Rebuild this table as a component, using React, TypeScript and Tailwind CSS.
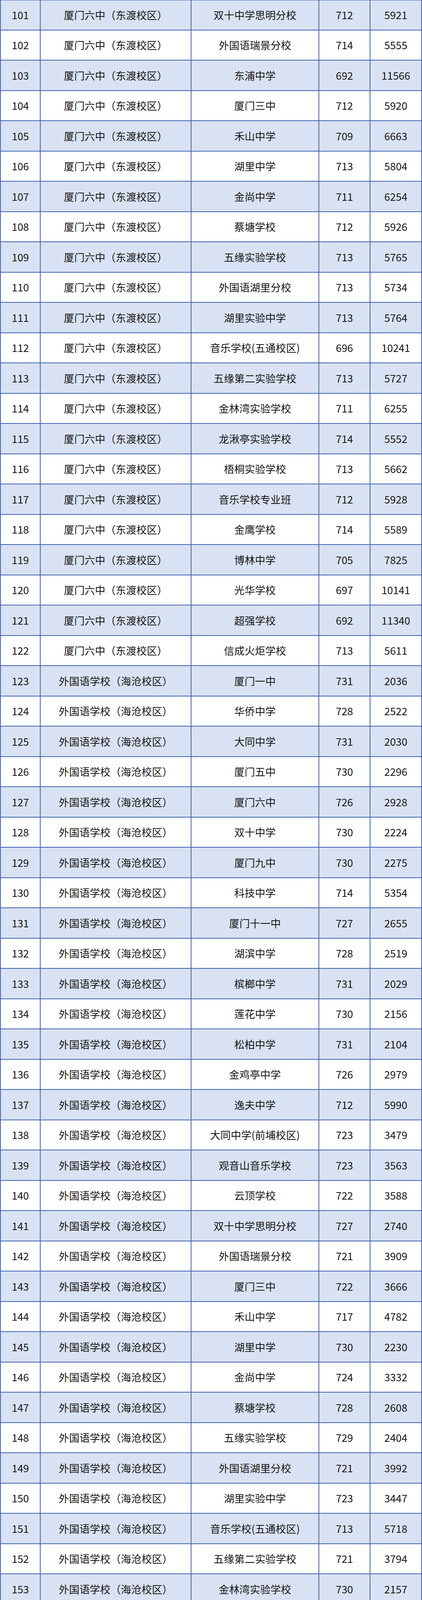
import React from 'react';

type Row = [string, string, number, number];

const D6 = '厦门六中（东渡校区）';
const WG = '外国语学校（海沧校区）';
const SS = '双十中学（枋湖校区）';

// [报考学校, 毕业学校, 分数, 排名]
const rows: Row[] = [
  [D6, '双十中学思明分校', 712, 5921],
  [D6, '外国语瑞景分校', 714, 5555],
  [D6, '东浦中学', 692, 11566],
  [D6, '厦门三中', 712, 5920],
  [D6, '禾山中学', 709, 6663],
  [D6, '湖里中学', 713, 5804],
  [D6, '金尚中学', 711, 6254],
  [D6, '蔡塘学校', 712, 5926],
  [D6, '五缘实验学校', 713, 5765],
  [D6, '外国语湖里分校', 713, 5734],
  [D6, '湖里实验中学', 713, 5764],
  [D6, '音乐学校(五通校区)', 696, 10241],
  [D6, '五缘第二实验学校', 713, 5727],
  [D6, '金林湾实验学校', 711, 6255],
  [D6, '龙湫亭实验学校', 714, 5552],
  [D6, '梧桐实验学校', 713, 5662],
  [D6, '音乐学校专业班', 712, 5928],
  [D6, '金鹰学校', 714, 5589],
  [D6, '博林中学', 705, 7825],
  [D6, '光华学校', 697, 10141],
  [D6, '超强学校', 692, 11340],
  [D6, '信成火炬学校', 713, 5611],
  [WG, '厦门一中', 731, 2036],
  [WG, '华侨中学', 728, 2522],
  [WG, '大同中学', 731, 2030],
  [WG, '厦门五中', 730, 2296],
  [WG, '厦门六中', 726, 2928],
  [WG, '双十中学', 730, 2224],
  [WG, '厦门九中', 730, 2275],
  [WG, '科技中学', 714, 5354],
  [WG, '厦门十一中', 727, 2655],
  [WG, '湖滨中学', 728, 2519],
  [WG, '槟榔中学', 731, 2029],
  [WG, '莲花中学', 730, 2156],
  [WG, '松柏中学', 731, 2104],
  [WG, '金鸡亭中学', 726, 2979],
  [WG, '逸夫中学', 712, 5990],
  [WG, '大同中学(前埔校区)', 723, 3479],
  [WG, '观音山音乐学校', 723, 3563],
  [WG, '云顶学校', 722, 3588],
  [WG, '双十中学思明分校', 727, 2740],
  [WG, '外国语瑞景分校', 721, 3909],
  [WG, '厦门三中', 722, 3666],
  [WG, '禾山中学', 717, 4782],
  [WG, '湖里中学', 730, 2230],
  [WG, '金尚中学', 724, 3332],
  [WG, '蔡塘学校', 728, 2608],
  [WG, '五缘实验学校', 729, 2404],
  [WG, '外国语湖里分校', 721, 3992],
  [WG, '湖里实验中学', 723, 3447],
  [WG, '音乐学校(五通校区)', 713, 5718],
  [WG, '五缘第二实验学校', 721, 3794],
  [WG, '金林湾实验学校', 730, 2157],
  [WG, '龙湫亭实验学校', 726, 2997],
  [WG, '梧桐实验学校', 719, 4380],
  [WG, '音乐学校专业班', 734, 1535],
  [WG, '博林中学', 713, 5812],
  [WG, '光华学校', 714, 5485],
  [WG, '信成火炬学校', 734, 1575],
  [WG, '海沧华附实验中学', 733, 1750],
  [WG, '海沧实验中学', 733, 1798],
  [WG, '东孚中学', 723, 3567],
  [WG, '海沧中学', 724, 3353],
  [WG, '北附学校', 733, 1660],
  [WG, '外国语海沧附属学校', 731, 2018],
  [WG, '双十中学海沧附属学校', 736, 1379],
  [WG, '海沧教师进修学校附校', 734, 1657],
  [WG, '厦门一中海沧校区', 725, 3126],
  [WG, '鳌冠学校', 730, 2159],
  [WG, '马銮湾实验学校', 728, 2572],
  [WG, '集美中学', 732, 1941],
  [WG, '厦门十中', 729, 2459],
  [WG, '杏南中学', 726, 2878],
  [WG, '乐安中学', 721, 3942],
  [WG, '后溪中学', 722, 3767],
  [WG, '灌口中学', 721, 3847],
  [WG, '上塘中学', 723, 3577],
  [WG, '滨水学校', 733, 1751],
  [WG, '杏东中学', 731, 2115],
  [WG, '西亭学校', 734, 1577],
  [WG, '集美实验学校', 730, 2292],
  [WG, '诚毅中学', 729, 2363],
  [WG, '蔡林学校', 728, 2490],
  [WG, '杏南中学（后溪校区）', 733, 1765],
  [WG, '华大集美附校', 726, 2952],
  [WG, '英才学校', 736, 1335],
  [WG, '厦门工学院附属学校', 724, 3291],
  [SS, '厦门一中', 732, 1855],
  [SS, '华侨中学', 730, 2280],
  [SS, '大同中学', 732, 1939],
  [SS, '厦门五中', 730, 2149],
  [SS, '厦门六中', 727, 2816],
  [SS, '双十中学', 731, 2069],
  [SS, '厦门九中', 730, 2228],
  [SS, '科技中学', 717, 4683],
  [SS, '厦门十一中', 728, 2531],
  [SS, '湖滨中学', 729, 2425],
  [SS, '槟榔中学', 732, 1868],
  [SS, '莲花中学', 731, 2077],
  [SS, '松柏中学', 731, 1986],
];

function Cell({ children, first }: { children: React.ReactNode; first?: boolean }) {
  return (
    <div
      className={
        'flex items-center justify-center overflow-hidden whitespace-nowrap border-r-2 border-[#3f63b1] ' +
        (first ? 'border-l-2' : '')
      }
    >
      {children}
    </div>
  );
}

export default function App() {
  return (
    <div
      className="flex w-[1080px] flex-col text-[26.5px] leading-none text-[#161616]"
      style={{ fontFamily: '"Noto Sans CJK SC", "Noto Sans", sans-serif' }}
    >
      {rows.map(([school, from, score, rank], i) => (
        <div
          key={i}
          className={
            'grid h-[77.5px] shrink-0 grid-cols-[104px_386px_327px_131px_132px] border-b-2 border-[#3f63b1] first:border-t ' +
            (i % 2 === 0 ? 'bg-[#d9e2f3]' : 'bg-white')
          }
        >
          <Cell first>{101 + i}</Cell>
          <Cell>{school}</Cell>
          <Cell>{from}</Cell>
          <Cell>{score}</Cell>
          <Cell>{rank}</Cell>
        </div>
      ))}
    </div>
  );
}
